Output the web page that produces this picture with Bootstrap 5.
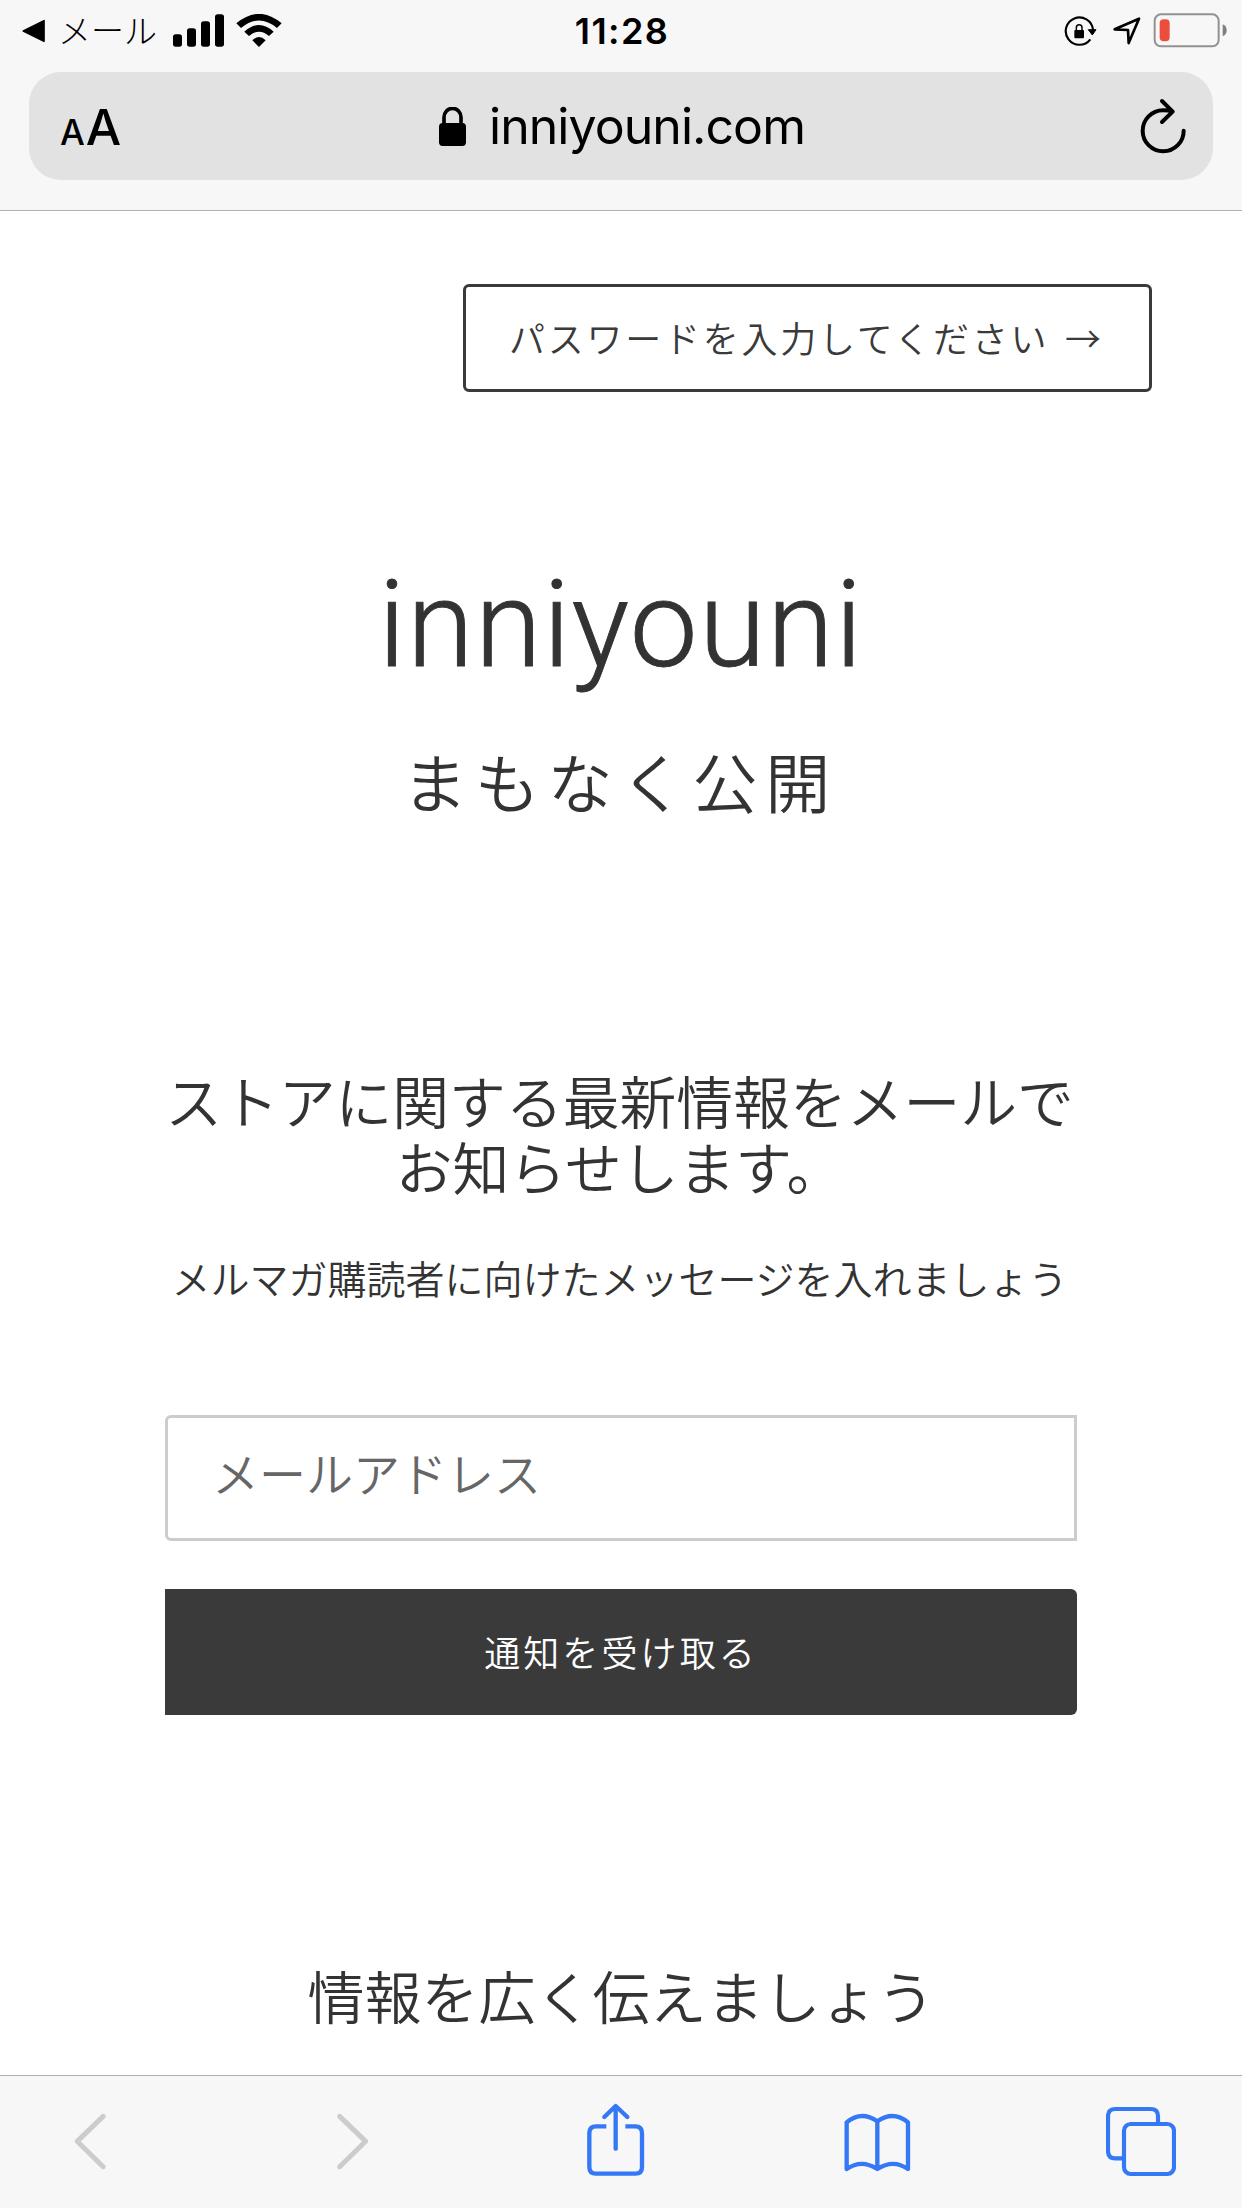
<!DOCTYPE html>
<html lang="ja">
<head>
<meta charset="utf-8">
<meta name="viewport" content="width=device-width, initial-scale=1">
<title>inniyouni</title>
<link href="https://cdn.jsdelivr.net/npm/bootstrap@5.3.0/dist/css/bootstrap.min.css" rel="stylesheet">
<style>
body{font-family:"Noto Sans CJK JP",sans-serif;font-weight:350;color:#333;background:#fff;height:2208px;overflow:hidden}
svg{display:block;flex:none}
.chrome-top{height:211px;background:#f7f7f7;border-bottom:1px solid #b2b2b2;color:#000}
.status{height:72px}
.status>div{flex:1 1 0;height:62px}
.status-left{padding-left:22px}
.status-right{padding-right:14px}
.back-app{font-size:33px;line-height:58px;padding-bottom:4px;margin-left:12px;width:99px;letter-spacing:0;font-weight:300}
.bars{margin-left:16px}
.wifi{margin-left:12px}
.clock{font:600 36px/62px Inter,sans-serif;letter-spacing:1.4px;margin:0 3px 0 -3px}
.address{height:108px;margin:0 29px;border-radius:32px;background:#e2e2e2;padding:0 25px 0 31px;font-family:Inter,sans-serif}
.address>div{flex:1 1 0}
.text-size{font-weight:450;line-height:108px;padding-top:6px}
.text-size .sm-a{font-size:35px}
.text-size .lg-a{font-size:50px;margin-left:1px}
.host{font-size:50px;line-height:108px;font-weight:400;letter-spacing:-.95px;margin:0 4px 0 23px}
.page{height:1864px}
.btn-password{width:689px;height:108px;margin:73px 90px 0 auto;border:3px solid #3a3a3a;border-radius:6px;color:#3a3a3a;font-size:36px;letter-spacing:2.75px;word-spacing:5px;padding:0 0 0 43px;line-height:100px;text-align:left;font-weight:350}
.brand{font:300 121px/140px Roboto,sans-serif;-webkit-text-stroke:.9px #333;margin-top:163px;letter-spacing:1.5px}
.soon{font-size:65px;letter-spacing:7.6px;line-height:90px;margin:40px 2px 0 0}
.panel{width:912px;margin-top:241px}
.headline{font-size:57px;line-height:66px;font-weight:350;margin:0}
.lead-in{margin-left:-3px;font-size:56.800px}
.blurb{font-size:39px;line-height:56px;margin:51px 0 0 -3px;white-space:nowrap}
.email{height:126px;margin-top:110px;border:3px solid #ccc;border-radius:6px 0 0 6px;padding:0 0 14px 44px;font-size:47px;font-weight:350}
.email::placeholder{color:#666;opacity:1}
.btn-notify{height:126px;margin-top:48px;border:0;border-radius:0 6px 6px 0;background:#3a3a3a;color:#fff;font-size:36px;letter-spacing:3.1px;font-weight:350;padding:0 0 2px}
.share-title{margin-top:246px}
.toolbar{height:133px;background:#f7f7f7;border-top:1px solid #b0b2b0;padding:0 66px 0 55px}
</style>
</head>
<body class="d-flex flex-column">
<header class="chrome-top flex-shrink-0">
  <div class="status d-flex">
    <div class="status-left d-flex align-items-center">
      <svg width="24" height="24" viewBox="67 58 72 72"><path d="M71 94 133 63V125Z" fill="#000" stroke="#000" stroke-width="5" stroke-linejoin="round"/></svg>
      <span class="back-app text-nowrap">メール</span>
      <svg class="bars" width="51" height="34" viewBox="519 40 153 102"><rect x="519" y="101" width="27" height="37" rx="8"/><rect x="561" y="83" width="27" height="55" rx="8"/><rect x="603" y="62" width="27" height="76" rx="8"/><rect x="645" y="41" width="27" height="97" rx="8"/></svg>
      <svg class="wifi" width="46" height="34" viewBox="708 40 138 102"><path d="M709 68Q777 11 845 68L831 82Q777 37 723 82ZM733 93Q777 53 821 93L807 106Q777 80 747 106ZM757 119Q777 99 797 119L777 139Z"/></svg>
    </div>
    <span class="clock">11:28</span>
    <div class="status-right d-flex align-items-center justify-content-end">
      <svg width="164" height="36" viewBox="190 38 492 108" fill="none" stroke="#000">
        <path d="M277 88A41 41 0 1 0 269 117" stroke-width="6.5"/><path d="M263 88H286L275 104Z" fill="#000" stroke-width="3" stroke-linejoin="round"/>
        <rect x="221" y="89" width="29" height="25" rx="3" fill="#000" stroke="none"/><path d="M227 90V82A8.500 8.500 0 0 1 244 82V90" stroke-width="4.500"/>
        <path d="M342 87 415 55 384 128 382 89Z" stroke-width="8" stroke-linejoin="round"/>
        <rect x="462" y="42" width="192" height="96" rx="19" stroke="#929292" stroke-width="6"/><path d="M666 72Q678 77 678 90T666 108Z" fill="#7f7f7f" stroke="none"/>
        <rect x="477" y="57" width="30" height="66" rx="12" fill="#ec4e3d" stroke="none"/>
      </svg>
    </div>
  </div>
  <div class="address d-flex align-items-center">
    <div class="text-size d-flex align-items-baseline"><span class="sm-a">A</span><span class="lg-a">A</span></div>
    <svg width="27" height="39" viewBox="54 318 81 117"><rect x="54" y="366" width="81" height="69" rx="11"/><path d="M69 370V349A25.500 27 0 0 1 120 349V370" fill="none" stroke="#000" stroke-width="11"/></svg>
    <span class="host">inniyouni.com</span>
    <div class="d-flex justify-content-end"><svg width="48" height="56" viewBox="418 294 144 168" fill="none" stroke="#000" stroke-width="12" stroke-linecap="round" stroke-linejoin="round"><path d="M549 392A61.500 61.500 0 1 1 487 331Q505 331 516 335M484 303 516 335 484 366"/></svg></div>
  </div>
</header>
<main class="page d-flex flex-column align-items-center flex-shrink-0">
  <a class="btn btn-password text-nowrap">パスワードを入力してください →</a>
  <h1 class="brand mb-0">inniyouni</h1>
  <p class="soon mb-0">まもなく公開</p>
  <section class="panel text-center">
    <h2 class="headline lead-in text-nowrap">ストアに関する最新情報をメールで<br>お知らせします。</h2>
    <p class="blurb">メルマガ購読者に向けたメッセージを入れましょう</p>
    <form>
      <input class="form-control email" type="email" placeholder="メールアドレス">
      <button class="btn btn-notify w-100" type="button">通知を受け取る</button>
    </form>
    <h2 class="headline share-title">情報を広く伝えましょう</h2>
  </section>
</main>
<footer class="toolbar d-flex justify-content-between flex-shrink-0">
  <svg width="70" height="132" viewBox="220.500 48 102 396" fill="none" stroke="#ccc" stroke-width="15" stroke-linecap="round" stroke-linejoin="round"><path d="M311 169 233 244 311 320"/></svg>
  <svg width="70" height="132" viewBox="1007 48 102 396" fill="none" stroke="#ccc" stroke-width="15" stroke-linecap="round" stroke-linejoin="round"><path d="M1018 169 1096 244 1018 320"/></svg>
  <svg width="70" height="132" viewBox="140 48 174 396" fill="none" stroke="#3478f6" stroke-width="13"><path d="M198 199H167Q147 199 147 219V321Q147 341 167 341H285Q305 341 305 321V219Q305 199 285 199H255"/><path d="M226 266V139M192 171 226 138 261 171" stroke-linecap="round" stroke-linejoin="round"/></svg>
  <svg width="70" height="132" viewBox="917 48 198 396" fill="none" stroke="#3478f6" stroke-width="13" stroke-linejoin="round"><path d="M922 187Q966 150 1014 184Q1062 150 1106 187V327Q1062 296 1014 327Q966 296 922 327ZM1014 184V327"/></svg>
  <svg width="70" height="132" viewBox="138 48 210 396" fill="none" stroke="#3478f6" stroke-width="12.500"><path d="M186 295H166Q144 295 144 273V169Q144 147 166 147H272Q294 147 294 169V190"/><rect x="192" y="192" width="150" height="150" rx="20"/></svg>
</footer>
<script src="https://cdn.jsdelivr.net/npm/bootstrap@5.3.0/dist/js/bootstrap.bundle.min.js"></script>
</body>
</html>
